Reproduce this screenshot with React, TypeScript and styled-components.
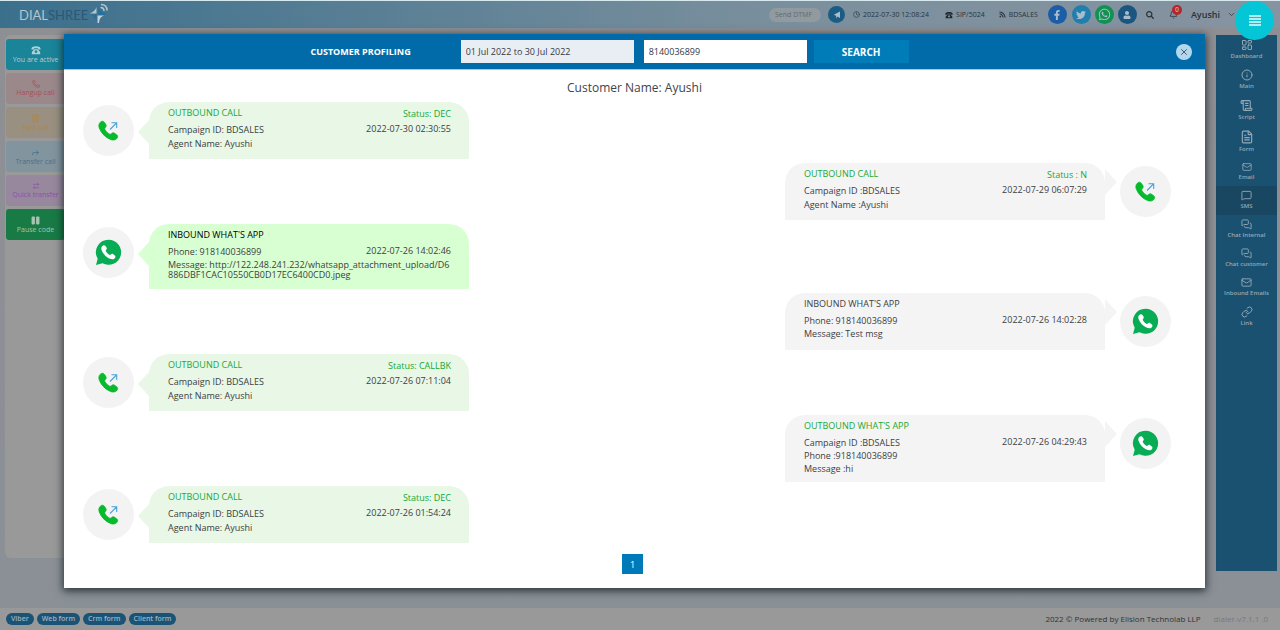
import React from "react";
import styled, { createGlobalStyle } from "styled-components";
import {
  FaFacebookF,
  FaTwitter,
  FaWhatsapp,
  FaUser,
  FaSearch,
  FaPause,
  FaRss,
} from "react-icons/fa";
import {
  ArrowRightLeft,
  Bell,
  ChevronDown,
  Clock,
  Forward,
  LayoutDashboard,
  Info,
  Pause,
  Phone,
  ScrollText,
  FileText,
  Mail,
  MessageSquare,
  MessagesSquare,
  Link as LinkIcon,
  X,
} from "lucide-react";

const GlobalStyle = createGlobalStyle`
  * { box-sizing: border-box; }
  body { margin: 0; font-family: "Open Sans", "Noto Sans", sans-serif; }
  button, input { font-family: inherit; }
  button { border: 0; padding: 0; cursor: pointer; }
  h1, h2, h3, p { margin: 0; font-weight: 400; }
`;

const Page = styled.div`
  position: relative;
  display: flex;
  flex-direction: column;
  min-height: 100vh;
  background: linear-gradient(#8f8f93, #8a9097);
`;

const TopBar = styled.header`
  display: flex;
  align-items: center;
  justify-content: space-between;
  height: 28px;
  padding: 0 44px 0 19px;
  border-top: 1px solid #d6e9ef;
  background: linear-gradient(90deg, #3b708d, #7a8f9d 60%, #8793a0);
`;

const Brand = styled.a`
  display: flex;
  align-items: center;
  font-family: Lato, sans-serif;
  font-size: 13px;
  line-height: 18px;
  color: #b4c6cf;
  text-decoration: none;
`;

const BrandTail = styled.span`
  color: #2a5878;
`;

const BrandMark = styled.svg`
  width: 21px;
  height: 22px;
  margin: 0 0 4px 1px;
`;

const Tools = styled.div`
  display: flex;
  align-items: center;
`;

const DtmfInput = styled.input`
  width: 52px;
  height: 14px;
  padding: 0 6px;
  border: 0;
  border-radius: 7px;
  background: #909a9f;
  font-size: 7px;
  &::placeholder {
    color: #626a70;
    opacity: 1;
  }
`;

const RoundButton = styled.button<{ $bg: string; $size: number; $gap: number }>`
  display: flex;
  align-items: center;
  justify-content: center;
  width: ${(p) => p.$size}px;
  height: ${(p) => p.$size}px;
  margin-left: ${(p) => p.$gap}px;
  border-radius: 50%;
  background: ${(p) => p.$bg};
  color: #a9bccb;
`;

const Fact = styled.span<{ $gap: number }>`
  display: flex;
  align-items: center;
  gap: 3px;
  margin-left: ${(p) => p.$gap}px;
  font-size: 7px;
  line-height: 10px;
  color: #2b343b;
  white-space: nowrap;
`;

const PlainButton = styled.button<{ $gap: number }>`
  position: relative;
  display: flex;
  align-items: center;
  gap: 7px;
  margin-left: ${(p) => p.$gap}px;
  background: none;
  color: #29323a;
  font-size: 9px;
  font-weight: 600;
`;

const Badge = styled.span`
  position: absolute;
  top: -5px;
  right: -4px;
  width: 10px;
  height: 10px;
  border-radius: 50%;
  background: #b3262e;
  color: #c9a9ab;
  font-size: 7px;
  line-height: 10px;
  text-align: center;
`;

const MenuButton = styled.button`
  position: absolute;
  z-index: 3;
  top: 1px;
  right: 6px;
  display: flex;
  align-items: center;
  justify-content: center;
  width: 39px;
  height: 39px;
  border-radius: 50%;
  background: #05c6d6;
`;

const Workspace = styled.main`
  flex: 1;
  display: flex;
  justify-content: space-between;
  padding: 7px 3px 0 5px;
`;

const ActionCard = styled.aside`
  display: flex;
  flex-direction: column;
  gap: 3px;
  width: 64px;
  margin-bottom: 50px;
  padding: 4px 4px 4px 1px;
  border-radius: 6px;
  background: #999;
`;

const Action = styled.button<{ $bg: string; $fg: string }>`
  display: flex;
  flex-direction: column;
  align-items: center;
  justify-content: center;
  height: 31px;
  border-radius: 3px;
  background: ${(p) => p.$bg};
  color: ${(p) => p.$fg};
  font-size: 7px;
  line-height: 9px;
  white-space: nowrap;
`;

const SideNav = styled.nav`
  width: 61px;
  margin-bottom: 37px;
  background: #1a5070;
`;

const NavItem = styled.a<{ $active?: boolean }>`
  display: flex;
  flex-direction: column;
  align-items: center;
  padding: 4px 0;
  background: ${(p) => (p.$active ? "#194661" : "transparent")};
  color: #93a9b7;
  font-size: 6px;
  line-height: 10px;
  font-weight: 600;
  text-decoration: none;
  white-space: nowrap;
`;

const Footer = styled.footer`
  display: flex;
  align-items: center;
  justify-content: space-between;
  height: 22px;
  padding: 0 12px 0 6px;
  background: #999;
`;

const FormLinks = styled.div`
  display: flex;
  gap: 3px;
`;

const FormLink = styled.button`
  height: 12px;
  padding: 0 5px;
  border-radius: 6px;
  background: #1b5376;
  color: #9fb3c0;
  font-size: 7px;
  line-height: 12px;
  font-weight: 600;
`;

const Credits = styled.p`
  display: flex;
  gap: 13px;
  font-size: 8px;
  line-height: 10px;
  color: #2f3336;
`;

const Version = styled.span`
  color: #727980;
`;

const Overlay = styled.div`
  position: absolute;
  z-index: 2;
  inset: 0;
  padding: 34px 75px 42px 64px;
`;

const Dialog = styled.section`
  display: flex;
  flex-direction: column;
  min-height: 100%;
  background: #fff;
  box-shadow: 0 2px 8px 1px rgba(10, 20, 25, 0.75);
`;

const SearchBar = styled.form`
  display: grid;
  grid-template-columns: 7fr auto 5fr;
  align-items: center;
  height: 36px;
  padding: 0 13px 0 0;
  border-bottom: 1px solid #9fcde6;
  background: #006ba8;
`;

const DialogTitle = styled.h1`
  justify-self: end;
  margin-right: 50px;
  color: #fff;
  font-size: 9px;
  line-height: 14px;
  font-weight: 700;
`;

const Fields = styled.div`
  display: flex;
`;

const Field = styled.input<{ $width: number; $gap: number; $bg: string }>`
  width: ${(p) => p.$width}px;
  height: 23px;
  margin-right: ${(p) => p.$gap}px;
  padding: 0 5px;
  border: 0;
  border-radius: 0;
  background: ${(p) => p.$bg};
  color: #35393d;
  font-size: 9px;
`;

const SearchButton = styled.button`
  width: 95px;
  height: 23px;
  background: #007cb9;
  color: #fff;
  font-size: 10px;
  font-weight: 700;
`;

const CloseButton = styled.button`
  justify-self: end;
  display: flex;
  align-items: center;
  justify-content: center;
  width: 16px;
  height: 16px;
  border-radius: 50%;
  background: #b3d8ee;
  color: #2d4454;
`;

const CustomerName = styled.h2`
  padding: 9px 0 5px;
  color: #3f4448;
  font-size: 12px;
  line-height: 18px;
  text-align: center;
`;

const Timeline = styled.ol`
  display: flex;
  flex-direction: column;
  gap: 4px;
  margin: 0;
  padding: 0 34px 0 19px;
  list-style: none;
`;

const Entry = styled.li<{ $right: boolean }>`
  display: flex;
  flex-direction: ${(p) => (p.$right ? "row-reverse" : "row")};
  align-items: flex-start;
  gap: 15px;
`;

const Avatar = styled.span`
  display: flex;
  align-items: center;
  justify-content: center;
  width: 51px;
  height: 51px;
  margin-top: 3px;
  border-radius: 50%;
  background: #f3f3f3;
`;

const Bubble = styled.article<{ $bg: string; $right: boolean }>`
  position: relative;
  display: grid;
  grid-template-columns: 1fr auto;
  align-content: start;
  width: 320px;
  min-height: 57px;
  padding: 4px 18px 7px 19px;
  border-radius: 20px 20px 0 0;
  background: ${(p) => p.$bg};
  color: #3c4043;
  font-size: 9px;
  line-height: 14px;

  &::before {
    content: "";
    position: absolute;
    top: ${(p) => (p.$right ? 6 : 17)}px;
    ${(p) => (p.$right ? "right: -12px;" : "left: -11px;")}
    width: 12px;
    height: 26px;
    background: inherit;
    clip-path: ${(p) =>
      p.$right ? "polygon(0 0, 100% 50%, 0 100%)" : "polygon(100% 0, 0 50%, 100% 100%)"};
  }
`;

const Kind = styled.h3<{ $color: string }>`
  margin-bottom: 3px;
  color: ${(p) => p.$color};
  font-size: 9px;
  line-height: 14px;
`;

const Status = styled.span`
  padding-top: 1px;
  color: #16a833;
  text-align: right;
`;

const Details = styled.div<{ $line: number }>`
  grid-column: 1;
  line-height: ${(p) => p.$line}px;
`;

const Stamp = styled.time`
  margin-top: -1px;
`;

const LongText = styled.p`
  grid-column: 1 / -1;
  margin: 2px -2px 2px 0;
  line-height: 10px;
  word-break: break-all;
`;

const Pager = styled.nav`
  display: flex;
  justify-content: center;
  padding: 11px 4px 13px 0;
`;

const PageButton = styled.button`
  width: 21px;
  height: 20px;
  background: #0079b8;
  color: #fff;
  font-size: 9px;
`;

function CallGlyph() {
  return (
    <svg width="21" height="21" viewBox="-0.5 -0.5 21 21" aria-hidden="true">
      <path
        d="M1.800 1.800c1.300-1.500 3-1.400 4 0l1.400 2c.8 1.200.6 2.200-.3 3.200-.8.800-.8 1.500-.3 2.400 1 1.700 2.300 3 4 4 .9.500 1.600.5 2.300-.2 1-1 2-1.200 3.200-.4l2 1.400c1.400 1 1.400 2.700 0 4-1.600 1.500-3.800 1.700-6.100.8C7 16.900 3 12.900.900 7.900 0 5.600.2 3.400 1.800 1.800z"
        fill="#07b92c"
        stroke="#07b92c"
        strokeWidth="0.800"
      />
      <path d="M11.500 9 18 2.500M13 2.300h5.200v5.200" fill="none" stroke="#4ba3dd" strokeWidth="1.100" />
    </svg>
  );
}

function ChatGlyph() {
  return (
    <svg width="27" height="27" viewBox="0 0 27 27" aria-hidden="true">
      <path
        d="M13.500 .8a12.500 12.500 0 1 1-6 23.400L1 26l1.700-6.300A12.500 12.500 0 0 1 13.500.8z"
        fill="#08ac55"
      />
      <path
        d="M7.300 7c1-1.200 2.500-1.100 3.200 0l1 1.600c.5.9.3 1.600-.4 2.300-.5.5-.5.900-.2 1.400.8 1.400 2 2.600 3.400 3.400.6.300 1 .3 1.500-.2.700-.8 1.500-.9 2.400-.3l1.400 1c1.200.9 1.100 2.200 0 3.200-1.200 1.100-2.900 1.100-4.600.4-4-1.700-7-4.800-8.400-8.700C6 9.500 6.300 8 7.300 7z"
        fill="#fff"
      />
    </svg>
  );
}

function DeskPhone({ size, color }: { size: number; color: string }) {
  return (
    <svg width={size} height={size} viewBox="0 0 12 12" fill={color} aria-hidden="true">
      <path d="M.5 4.500C.5 2.500 3 1.500 6 1.500s5.500 1 5.500 3v1H8.500V4h-5v1.500h-3z" />
      <path fillRule="evenodd" d="M4 5h4l3 3.500V11H1V8.500zM6 6.200a1.700 1.700 0 1 0 .01 0z" />
    </svg>
  );
}

type Item = {
  right?: boolean;
  call?: boolean;
  bg: string;
  kind: string;
  kindColor: string;
  status?: string;
  stamp: string;
  lines: string[];
  long?: string;
};

const GREEN = "#19a934";
const entries: Item[] = [
  {
    call: true,
    bg: "#e8f7e6",
    kind: "OUTBOUND CALL",
    kindColor: GREEN,
    status: "Status: DEC",
    stamp: "2022-07-30 02:30:55",
    lines: ["Campaign ID: BDSALES", "Agent Name: Ayushi"],
  },
  {
    right: true,
    call: true,
    bg: "#f4f4f4",
    kind: "OUTBOUND CALL",
    kindColor: GREEN,
    status: "Status : N",
    stamp: "2022-07-29 06:07:29",
    lines: ["Campaign ID :BDSALES", "Agent Name :Ayushi"],
  },
  {
    bg: "#d8ffd1",
    kind: "INBOUND WHAT'S APP",
    kindColor: "#000",
    stamp: "2022-07-26 14:02:46",
    lines: ["Phone: 918140036899"],
    long: "Message: http://122.248.241.232/whatsapp_attachment_upload/D6886DBF1CAC10550CB0D17EC6400CD0.jpeg",
  },
  {
    right: true,
    bg: "#f4f4f4",
    kind: "INBOUND WHAT'S APP",
    kindColor: "#3c4043",
    stamp: "2022-07-26 14:02:28",
    lines: ["Phone: 918140036899", "Message: Test msg"],
  },
  {
    call: true,
    bg: "#e8f7e6",
    kind: "OUTBOUND CALL",
    kindColor: GREEN,
    status: "Status: CALLBK",
    stamp: "2022-07-26 07:11:04",
    lines: ["Campaign ID: BDSALES", "Agent Name: Ayushi"],
  },
  {
    right: true,
    bg: "#f4f4f4",
    kind: "OUTBOUND WHAT'S APP",
    kindColor: GREEN,
    stamp: "2022-07-26 04:29:43",
    lines: ["Campaign ID :BDSALES", "Phone :918140036899", "Message :hi"],
  },
  {
    call: true,
    bg: "#e8f7e6",
    kind: "OUTBOUND CALL",
    kindColor: GREEN,
    status: "Status: DEC",
    stamp: "2022-07-26 01:54:24",
    lines: ["Campaign ID: BDSALES", "Agent Name: Ayushi"],
  },
];

const actions = [
  { label: "You are active", bg: "#1a8499", fg: "#b3d0d6", icon: <DeskPhone size={10} color="#b3d0d6" /> },
  { label: "Hangup call", bg: "#9a888b", fg: "#ab4f58", icon: <Phone size={8} /> },
  { label: "Park call", bg: "#999082", fg: "#b08642", icon: <Pause size={9} /> },
  { label: "Transfer call", bg: "#82959f", fg: "#42708a", icon: <Forward size={9} /> },
  { label: "Quick transfer", bg: "#98889e", fg: "#8853a5", icon: <ArrowRightLeft size={8} /> },
  { label: "Pause code", bg: "#187b46", fg: "#a5c4b1", icon: <FaPause size={9} /> },
];

const navItems = [
  { label: "Dashboard", Icon: LayoutDashboard, size: 12 },
  { label: "Main", Icon: Info, size: 12 },
  { label: "Script", Icon: ScrollText, size: 13 },
  { label: "Form", Icon: FileText, size: 14 },
  { label: "Email", Icon: Mail, size: 10 },
  { label: "SMS", Icon: MessageSquare, size: 11, active: true },
  { label: "Chat Internal", Icon: MessagesSquare, size: 11 },
  { label: "Chat customer", Icon: MessagesSquare, size: 11 },
  { label: "Inbound Emails", Icon: Mail, size: 11 },
  { label: "Link", Icon: LinkIcon, size: 12 },
];

function TimelineEntry({ item }: { item: Item }) {
  const right = Boolean(item.right);
  return (
    <Entry $right={right}>
      <Avatar>{item.call ? <CallGlyph /> : <ChatGlyph />}</Avatar>
      <Bubble $bg={item.bg} $right={right}>
        <Kind $color={item.kindColor}>{item.kind}</Kind>
        <Status>{item.status}</Status>
        <Details $line={item.call ? 14 : 13}>
          {item.lines.map((line) => (
            <p key={line}>{line}</p>
          ))}
        </Details>
        <Stamp>{item.stamp}</Stamp>
        {item.long && <LongText>{item.long}</LongText>}
      </Bubble>
    </Entry>
  );
}

export default function App() {
  return (
    <Page>
      <GlobalStyle />
      <TopBar>
        <Brand href="#home">
          DIAL<BrandTail>SHREE</BrandTail>
          <BrandMark viewBox="0 0 21 22" aria-hidden="true">
            <path d="M7.500 5v6.500H.5C4 10.500 6.500 8 7.500 5z" fill="#b4c6cf" />
            <path d="M9.500 5c1 3 3 5.500 7 6.500v1.500h-7z" fill="#2470a0" />
            <path d="M.5 12.500h7V20C6.500 16 4 13.500.5 12.500z" fill="#2470a0" />
            <path d="M8.500 13.500H16c-4 .5-5.500 3-6 7.500H8.500z" fill="#c3d2d9" />
            <path d="M11.500 5.500c2.300 0 3.500 1.200 3.500 3.500M12 2.500c4 0 6 2 6 6" fill="none" stroke="#b4c6cf" strokeWidth="1.600" />
          </BrandMark>
        </Brand>
        <Tools>
          <DtmfInput placeholder="Send DTMF" aria-label="Send DTMF" />
          <RoundButton $bg="#1b5c85" $size={17} $gap={7} aria-label="Send tones">
            <svg width="8" height="8" viewBox="0 0 8 8" aria-hidden="true">
              <path d="M7 .5v6.500L4.500 5.500 3.500 7.500 3 4.800.8 3.800z" fill="#a9bccb" />
            </svg>
          </RoundButton>
          <Fact $gap={8}>
            <Clock size={7} /> 2022-07-30 12:08:24
          </Fact>
          <Fact $gap={16}>
            <DeskPhone size={8} color="#20282e" /> SIP/5024
          </Fact>
          <Fact $gap={14}>
            <FaRss size={7} /> BDSALES
          </Fact>
          <RoundButton $bg="#1b5da6" $size={19} $gap={10} aria-label="Facebook">
            <FaFacebookF size={10} />
          </RoundButton>
          <RoundButton $bg="#217fae" $size={19} $gap={5} aria-label="Twitter">
            <FaTwitter size={10} />
          </RoundButton>
          <RoundButton $bg="#129150" $size={19} $gap={4} aria-label="WhatsApp">
            <FaWhatsapp size={13} />
          </RoundButton>
          <RoundButton $bg="#1b5580" $size={19} $gap={4} aria-label="Profile">
            <FaUser size={8} />
          </RoundButton>
          <PlainButton $gap={9} aria-label="Search">
            <FaSearch size={8} />
          </PlainButton>
          <PlainButton $gap={15} aria-label="Notifications">
            <Bell size={9} />
            <Badge>0</Badge>
          </PlainButton>
          <PlainButton $gap={13}>
            Ayushi <ChevronDown size={9} />
          </PlainButton>
        </Tools>
      </TopBar>
      <MenuButton aria-label="Menu">
        <svg width="12" height="11" viewBox="0 0 12 11" aria-hidden="true">
          <path d="M0 1h12M0 4h12M0 7h12M0 10h12" stroke="#e9fbfc" strokeWidth="1.500" />
        </svg>
      </MenuButton>

      <Workspace>
        <ActionCard>
          {actions.map((a) => (
            <Action key={a.label} $bg={a.bg} $fg={a.fg}>
              {a.icon}
              {a.label}
            </Action>
          ))}
        </ActionCard>
        <SideNav>
          {navItems.map(({ label, Icon, size, active }) => (
            <NavItem key={label} href="#nav" $active={active}>
              <Icon size={size} strokeWidth={2} />
              {label}
            </NavItem>
          ))}
        </SideNav>
      </Workspace>

      <Footer>
        <FormLinks>
          <FormLink>Viber</FormLink>
          <FormLink>Web form</FormLink>
          <FormLink>Crm form</FormLink>
          <FormLink>Client form</FormLink>
        </FormLinks>
        <Credits>
          2022 © Powered by Elision Technolab LLP <Version>dialer-v7.1.1 .0</Version>
        </Credits>
      </Footer>

      <Overlay>
        <Dialog role="dialog" aria-label="Customer profiling">
          <SearchBar>
            <DialogTitle>CUSTOMER PROFILING</DialogTitle>
            <Fields>
              <Field $width={173} $gap={10} $bg="#e9eef5" aria-label="Date range" defaultValue="01 Jul 2022 to 30 Jul 2022" />
              <Field $width={163} $gap={7} $bg="#fff" aria-label="Phone number" defaultValue="8140036899" />
              <SearchButton type="button">SEARCH</SearchButton>
            </Fields>
            <CloseButton type="button" aria-label="Close">
              <X size={10} strokeWidth={2} />
            </CloseButton>
          </SearchBar>
          <CustomerName>Customer Name: Ayushi</CustomerName>
          <Timeline>
            {entries.map((item) => (
              <TimelineEntry key={item.stamp} item={item} />
            ))}
          </Timeline>
          <Pager aria-label="Pages">
            <PageButton>1</PageButton>
          </Pager>
        </Dialog>
      </Overlay>
    </Page>
  );
}
